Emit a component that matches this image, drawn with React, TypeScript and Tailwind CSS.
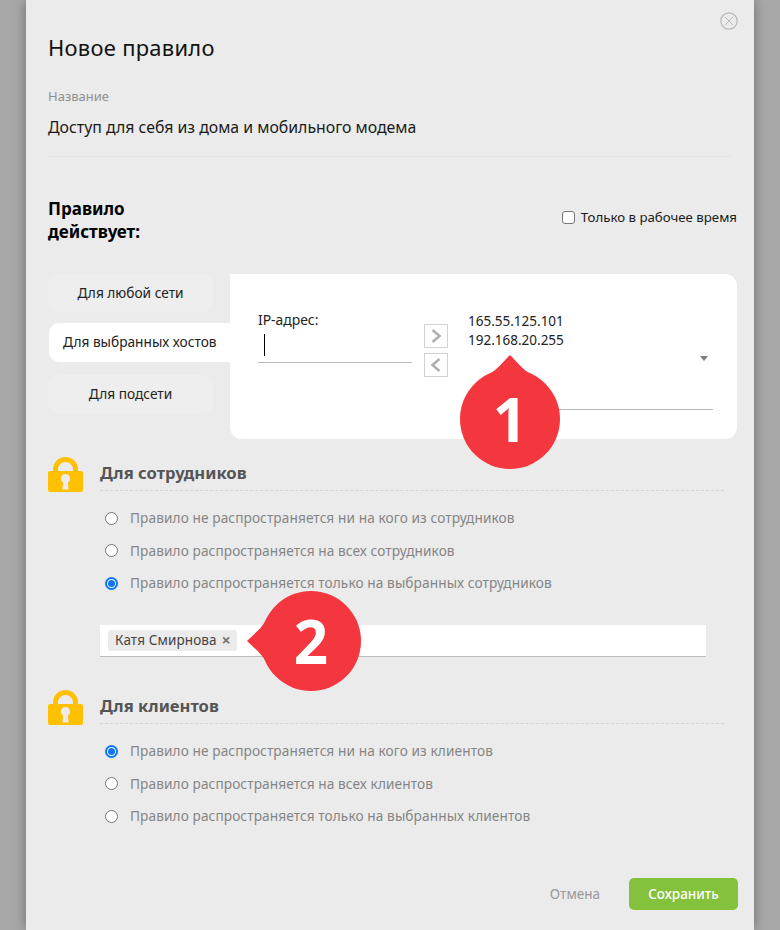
import React from "react";

const FONT = "font-['Noto_Sans','Open_Sans',sans-serif]";

// padlock used next to both section headings
const Lock = () => (
  <svg width="35" height="35" viewBox="0 0 35 35" className="shrink-0">
    <path d="M5 16V12.5C5 5.5 10.5 0 17.5 0S30 5.5 30 12.5V16H25V12.5C25 8.3 21.7 5 17.5 5S10 8.3 10 12.5V16Z" fill="#ffc000" />
    <path fillRule="evenodd" clipRule="evenodd" d="M2 14H33a2 2 0 0 1 2 2V33a2 2 0 0 1-2 2H2a2 2 0 0 1-2-2V16a2 2 0 0 1 2-2ZM17.5 17a4.6 4.6 0 0 0-2.4 8.5L14.4 32.5H20.6L19.9 25.5a4.6 4.6 0 0 0-2.4-8.5Z" fill="#ffc000" />
  </svg>
);

const Radio = ({ label, checked = false }: { label: string; checked?: boolean }) => (
  <div className="flex items-center h-[32.5px]">
    <span
      className={`w-[13px] h-[13px] rounded-full border bg-white shrink-0 flex items-center justify-center ml-[5px] mr-[12px] ${
        checked ? "border-[#0f75f5] border-2" : "border-[#767676]"
      }`}
    >
      {checked && <span className="w-[7px] h-[7px] rounded-full bg-[#0f75f5]" />}
    </span>
    <span className="text-[13.65px] text-[#858585] tracking-[0.1px]">{label}</span>
  </div>
);

const SectionHead = ({ title }: { title: string }) => (
  <div className="flex items-start gap-[17px]">
    <Lock />
    <div className="w-[624px] h-[33px] mt-[1px] border-b border-dashed border-[#d4d4d4] text-[16.6px] leading-[30px] font-bold text-[#555555]">
      {title}
    </div>
  </div>
);

// red numbered callout, the tip direction differs per badge
const Badge = ({ n, tip, className }: { n: string; tip: "up" | "left"; className: string }) => (
  <div className={`absolute w-[114px] h-[114px] ${className}`}>
    <svg width="114" height="114" viewBox="0 0 114 114" className="absolute inset-0">
      <circle cx="64" cy="64" r="50" fill="#f4373f" />
      {tip === "up" ? (
        <path d="M64 0C57 7 53 13 42 20H86C75 13 71 7 64 0Z" fill="#f4373f" />
      ) : (
        <path d="M0 64C7 57 13 53 20 42V86C13 75 7 71 0 64Z" fill="#f4373f" />
      )}
    </svg>
    <span className="absolute left-[14px] top-[14px] w-[100px] h-[100px] flex items-center justify-center text-white text-[60px] font-bold leading-none font-['Open_Sans',sans-serif]">
      {n}
    </span>
  </div>
);

const Arrow = ({ d }: { d: string }) => (
  <div className="w-[24px] h-[24px] border border-[#d2d2d2] flex items-center justify-center">
    <svg width="14" height="16" viewBox="0 0 14 16">
      <path d={d} fill="none" stroke="#b0b0b0" strokeWidth="2.6" />
    </svg>
  </div>
);

export default function App() {
  return (
    <div className={`${FONT} w-[780px] h-[930px] overflow-hidden flex justify-center bg-[#a8a8a8]`}>
      <div className="relative w-[728px] h-[930px] bg-[#ebebeb] shadow-[0_0_12px_rgba(0,0,0,0.35)] px-[22px] pt-[33px]">
        {/* close */}
        <svg width="18" height="18" viewBox="0 0 18 18" className="absolute left-[694px] top-[12px]">
          <circle cx="9" cy="9" r="8.2" fill="none" stroke="#b9b9b9" strokeWidth="1.2" />
          <path d="M5 5L13 13M13 5L5 13" stroke="#b9b9b9" strokeWidth="1" />
        </svg>

        <h1 className="text-[21.9px] leading-[30px] text-[#111111] tracking-[0.3px]">Новое правило</h1>

        <div className="mt-[24px] text-[13px] leading-[18px] text-[#8f8f8f]">Название</div>
        <div className="mt-[10px] text-[15.85px] leading-[24px] text-[#1a1a1a]">Доступ для себя из дома и мобильного модема</div>
        <div className="mt-[17px] w-[684px] border-b border-[#e3e3e3]" />

        <div className="mt-[40px] flex justify-between items-start">
          <div className="text-[17px] leading-[23px] font-bold text-black w-[120px]">Правило действует:</div>
          <label className="flex items-center mt-[10px] mr-[-5px] text-[13.25px] leading-[20px] text-[#1a1a1a]">
            <span className="w-[13px] h-[13px] bg-white border border-[#767676] rounded-[3px] mr-[6px]" />
            Только в рабочее время
          </label>
        </div>

        <div className="mt-[31px] flex">
          {/* rule scope tabs */}
          <div className="w-[182px] shrink-0 text-[13.7px] text-[#222222]">
            <div className="w-[165px] h-[38px] rounded-[10px] bg-[#eeeeee] flex items-center justify-center">Для любой сети</div>
            <div className="mt-[11px] ml-[1px] h-[39px] rounded-l-[10px] bg-white flex items-center pl-[14px] whitespace-nowrap">Для выбранных хостов</div>
            <div className="mt-[13px] w-[165px] h-[38px] rounded-[10px] bg-[#eeeeee] flex items-center justify-center">Для подсети</div>
          </div>

          <div className="w-[507px] h-[165px] shrink-0 bg-white rounded-r-[12px] rounded-bl-[12px] flex pl-[28px] pt-[36px] text-[#222222]">
            <div className="w-[154px]">
              <div className="text-[13.9px] leading-[20px]">IP-адрес:</div>
              <div className="h-[33px] border-b border-[#b9b9b9] pl-[6px] pt-[4px]">
                <div className="w-[1px] h-[22px] bg-black" />
              </div>
            </div>
            <div className="ml-[12px] mt-[14px] flex flex-col gap-[5px]">
              <Arrow d="M3.5 2L10.5 8L3.5 14" />
              <Arrow d="M10.5 2L3.5 8L10.5 14" />
            </div>
            <div className="ml-[20px] w-[245px] h-[99px] border-b border-[#b9b9b9] relative text-[13.5px] leading-[19px] mt-[1px] pt-[1px]">
              <div>165.55.125.101</div>
              <div>192.168.20.255</div>
              <span className="absolute right-[5px] top-[45px] border-x-[4px] border-x-transparent border-t-[5px] border-t-[#808080]" />
            </div>
          </div>
        </div>

        <div className="mt-[18px]">
          <SectionHead title="Для сотрудников" />
          <div className="ml-[52px] mt-[10px]">
            <Radio label="Правило не распространяется ни на кого из сотрудников" />
            <Radio label="Правило распространяется на всех сотрудников" />
            <Radio label="Правило распространяется только на выбранных сотрудников" checked />
            <div className="mt-[25px] w-[606px] h-[32px] bg-white border-b border-[#bdbdbd] flex items-center pl-[8px]">
              <span className="h-[21px] rounded-[3px] bg-[#ebebeb] pl-[7px] pr-[6px] flex items-center text-[13.5px] text-[#444444] tracking-[0.1px]">
                Катя Смирнова
                <span className="ml-[5px] text-[16px] font-bold text-[#777777] leading-none">×</span>
              </span>
            </div>
          </div>
        </div>

        <div className="mt-[33px]">
          <SectionHead title="Для клиентов" />
          <div className="ml-[52px] mt-[10.5px]">
            <Radio label="Правило не распространяется ни на кого из клиентов" checked />
            <Radio label="Правило распространяется на всех клиентов" />
            <Radio label="Правило распространяется только на выбранных клиентов" />
          </div>
        </div>

        <div className="absolute left-0 right-[16px] top-[878px] flex justify-end items-center">
          <span className="text-[13.5px] text-[#999999] mr-[29px]">Отмена</span>
          <button className="w-[109px] h-[32px] rounded-[5px] bg-[#84c13c] text-white text-[13.5px] font-medium">Сохранить</button>
        </div>

        <Badge n="1" tip="up" className="left-[420px] top-[355px]" />
        <Badge n="2" tip="left" className="left-[221px] top-[577px]" />
      </div>
    </div>
  );
}
